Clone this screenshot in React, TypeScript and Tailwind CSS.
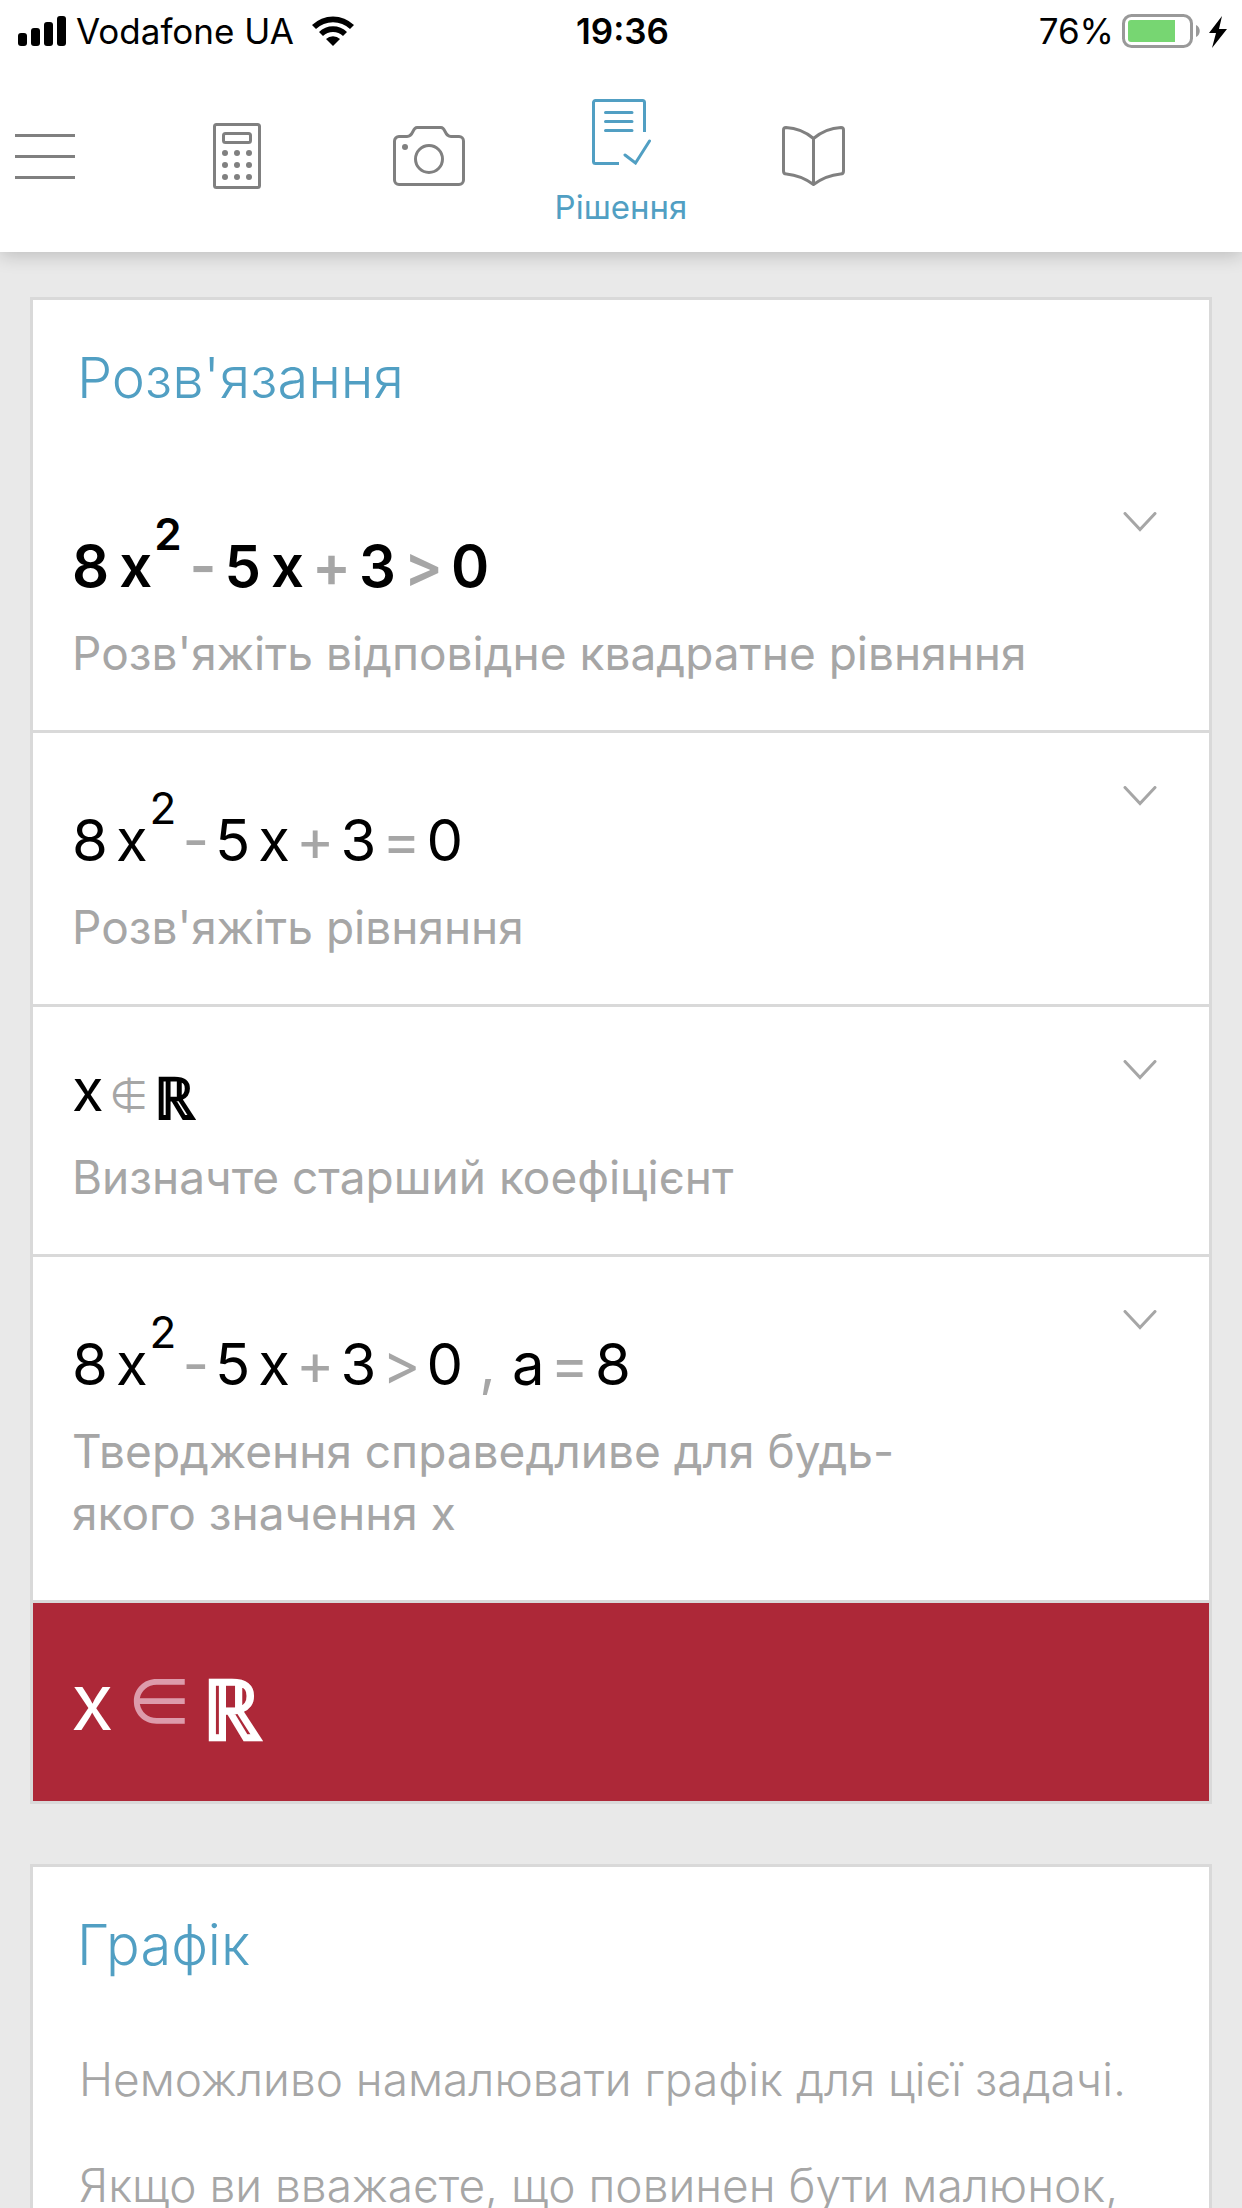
import type { ReactNode } from "react";

function SignalIcon() {
    return (
        <svg width="48" height="30" viewBox="0 0 48 30" aria-hidden="true">
            <rect x="0" y="17" width="9" height="13" rx="3" />
            <rect x="13" y="12" width="9" height="18" rx="3" />
            <rect x="26" y="6" width="9" height="24" rx="3" />
            <rect x="39" y="0" width="9" height="30" rx="3" />
        </svg>
    );
}

function WifiIcon() {
    return (
        <svg width="42" height="30" viewBox="0 0 42 30" aria-hidden="true">
            <path d="M0 9 A30 30 0 0 1 42 9 L38 13 A25 25 0 0 0 4 13 Z" />
            <path d="M7 16 A20 20 0 0 1 35 16 L31 20 A14.500 14.500 0 0 0 11 20 Z" />
            <path d="M14 23 A10 10 0 0 1 28 23 L21 30 Z" />
        </svg>
    );
}

function BatteryIcon() {
    return (
        <svg width="105" height="34" viewBox="0 0 105 34" aria-hidden="true">
            <rect x="1.500" y="1.500" width="68" height="31" rx="8" fill="none" stroke="#999999" strokeWidth="3" />
            <path d="M9 6 H53 V28 H9 A3 3 0 0 1 6 25 V9 A3 3 0 0 1 9 6 Z" fill="#77d672" />
            <path d="M74 11 C79 13 79 21 74 23 Z" fill="#999999" />
            <path d="M100 2 L87 19 H94 L90 34 L105 15 H97 Z" />
        </svg>
    );
}

function CalculatorIcon() {
    const dots = [12, 24, 36];
    return (
        <svg width="48" height="66" viewBox="0 0 48 66" fill="none" stroke="#808080" strokeWidth="3" aria-hidden="true">
            <rect x="1.500" y="1.500" width="45" height="63" rx="2" />
            <rect x="10.500" y="10.500" width="27" height="9" rx="2" />
            {[30, 42, 54].map((y) => dots.map((x) => (
                <circle key={`${x}-${y}`} cx={x} cy={y} r="3" fill="#808080" stroke="none" />
            )))}
        </svg>
    );
}

function CameraIcon() {
    return (
        <svg width="72" height="60" viewBox="0 0 72 60" fill="none" stroke="#808080" strokeWidth="3" aria-hidden="true">
            <path d="M6 10.500 H14 C21 10.500 19 1.500 24 1.500 H48 C53 1.500 51 10.500 58 10.500 H66 A4.500 4.500 0 0 1 70.500 15 V54 A4.500 4.500 0 0 1 66 58.500 H6 A4.500 4.500 0 0 1 1.500 54 V15 A4.500 4.500 0 0 1 6 10.500 Z" />
            <circle cx="36" cy="33" r="13.500" />
            <circle cx="12" cy="21" r="3" fill="#808080" stroke="none" />
        </svg>
    );
}

function SolutionIcon() {
    return (
        <svg width="59" height="66" viewBox="0 0 59 66" fill="none" stroke="#519fc3" strokeWidth="3" aria-hidden="true">
            <path d="M27 64.500 H3.500 A2 2 0 0 1 1.500 62.500 V3.500 A2 2 0 0 1 3.500 1.500 H50.500 A2 2 0 0 1 52.500 3.500 V33" />
            <path d="M13.500 13.500 H40 M13.500 22.500 H40 M13.500 31.500 H40 M33 56 L43.500 64 L57.500 42" strokeLinecap="round" />
        </svg>
    );
}

function BookIcon() {
    return (
        <svg width="63" height="60" viewBox="0 0 63 60" fill="none" stroke="#808080" strokeWidth="3" strokeLinejoin="round" aria-hidden="true">
            <path d="M31.500 12.500 C25 7 15 2 4 1.500 Q1.500 1.500 1.500 4 V45 Q1.500 48 4.500 48 C15 49 24 53 31.500 58.500 C39 53 48 49 58.500 48 Q61.500 48 61.500 45 V4 Q61.500 1.500 59 1.500 C48 2 38 7 31.500 12.500 V58" />
        </svg>
    );
}

function Op({ children }: { children: ReactNode }) {
    return <span className="-mx-0.5 text-[#a6a6a6]">{children}</span>;
}

function Quadratic() {
    return (
        <>
            <span>8</span>
            <span className="flex items-start gap-0.5">
                <span className="pt-6">x</span>
                <sup className="top-0 text-[44px] leading-none">2</sup>
            </span>
            <Op>-</Op>
            <span>5</span>
            <span>x</span>
            <Op>+</Op>
            <span>3</span>
        </>
    );
}

type StepProps = {
    children: ReactNode;
    hint: ReactNode;
    bold?: boolean;
};

function Step({ children, hint, bold }: StepProps) {
    return (
        <li className="flex items-start justify-between border-b-[3px] border-[#d9d9d9] pt-[53px] pr-[52px] pb-[46px] pl-[39px] last:pb-14">
            <div>
                <div className={`flex items-baseline text-[58px] leading-[60px] text-black ${bold ? "gap-2.5 font-semibold" : "gap-2"}`}>
                    {children}
                </div>
                <p className="mt-[26px] text-[46px] leading-[62px] text-[#a6a6a6]">{hint}</p>
            </div>
            <button type="button" aria-label="Показати кроки">
                <svg width="34" height="20" viewBox="0 0 34 20" fill="none" stroke="#a6a6a6" strokeWidth="3" aria-hidden="true">
                    <path d="M2 1.500 L17 17.500 L32 1.500" strokeLinecap="round" />
                </svg>
            </button>
        </li>
    );
}

export default function App() {
    return (
        <div className="flex h-screen flex-col overflow-hidden bg-[#e9e9e9] font-['Inter','Noto_Sans',sans-serif]">
            <header className="z-10 shrink-0 bg-white shadow-[0_3px_18px_rgba(0,0,0,0.2)]">
                <div className="grid h-15 grid-cols-[1fr_auto_1fr] items-center pt-0.5 pr-[15px] pl-[18px] text-[35px] text-black">
                    <div className="flex items-center">
                        <SignalIcon />
                        <span className="mr-[18px] ml-[10px]">Vodafone UA</span>
                        <WifiIcon />
                    </div>
                    <span className="font-semibold">19:36</span>
                    <div className="flex items-center justify-end gap-2">
                        <span>76%</span>
                        <BatteryIcon />
                    </div>
                </div>
                <nav className="flex h-48 items-center">
                    <button type="button" aria-label="Меню" className="w-[141px] pl-[15px]">
                        <svg width="60" height="45" viewBox="0 0 60 45" stroke="#808080" strokeWidth="3" aria-hidden="true">
                            <path d="M0 1.500 H60 M0 22.500 H60 M0 43.500 H60" />
                        </svg>
                    </button>
                    <a href="#calculator" aria-label="Калькулятор" className="flex w-48 justify-center">
                        <CalculatorIcon />
                    </a>
                    <a href="#camera" aria-label="Камера" className="flex w-48 justify-center">
                        <CameraIcon />
                    </a>
                    <a href="#solution" className="flex w-48 flex-col items-center gap-[22px] self-start pt-[39px] text-[33px] leading-10 text-[#519fc3]">
                        <SolutionIcon />
                        Рішення
                    </a>
                    <a href="#book" aria-label="Підручник" className="flex w-48 justify-center">
                        <BookIcon />
                    </a>
                </nav>
            </header>

            <main className="flex flex-col gap-15 px-[30px] pt-[45px]">
                <section className="border-[3px] border-[#d9d9d9] bg-white">
                    <h2 className="px-11 pt-[38px] pb-[41px] text-[56px] leading-[80px] font-light text-[#519fc3]">
                        Розв'язання
                    </h2>
                    <ol>
                        <Step bold hint="Розв'яжіть відповідне квадратне рівняння">
                            <Quadratic />
                            <Op>&gt;</Op>
                            <span>0</span>
                        </Step>
                        <Step hint="Розв'яжіть рівняння">
                            <Quadratic />
                            <Op>=</Op>
                            <span>0</span>
                        </Step>
                        <Step hint="Визначте старший коефіцієнт">
                            <span>x</span>
                            <span className="-mx-1 font-['Noto_Sans_CJK_JP',sans-serif] text-[42px] leading-10 text-[#a6a6a6]">∉</span>
                            <span className="self-end font-['Noto_Sans_CJK_JP',sans-serif] leading-13 font-bold">ℝ</span>
                        </Step>
                        <Step hint={<>Твердження справедливе для будь-<br />якого значення x</>}>
                            <Quadratic />
                            <Op>&gt;</Op>
                            <span>0</span>
                            <span className="px-2 text-[#a6a6a6]">,</span>
                            <span>a</span>
                            <Op>=</Op>
                            <span>8</span>
                        </Step>
                    </ol>
                    <div className="flex h-[198px] items-center gap-3 bg-[#ad2838] pl-[38px] text-[78px] leading-none text-white">
                        <span>x</span>
                        <span className="-mr-1 pb-2 font-['Noto_Sans_CJK_JP',sans-serif] text-[68px] font-medium text-[#dd9bab]">∈</span>
                        <span className="pt-1 font-['Noto_Sans_CJK_JP',sans-serif] text-[84px] font-bold">ℝ</span>
                    </div>
                </section>

                <section className="border-[3px] border-[#d9d9d9] bg-white">
                    <h2 className="px-11 pt-[38px] pb-[41px] text-[56px] leading-[80px] font-light text-[#519fc3]">
                        Графік
                    </h2>
                    <div className="flex flex-col gap-11 px-[46px] pt-[22px] pb-11 text-[46px] leading-[62px] font-light text-[#a6a6a6]">
                        <p>Неможливо намалювати графік для цієї задачі.</p>
                        <p>Якщо ви вважаєте, що повинен бути малюнок,</p>
                    </div>
                </section>
            </main>
        </div>
    );
}
